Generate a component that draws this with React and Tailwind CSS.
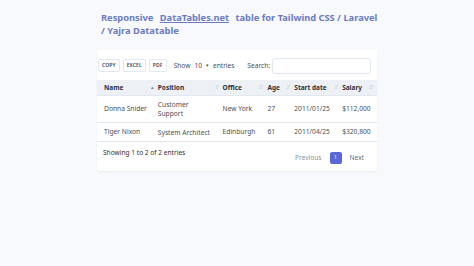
import { useState } from 'react'

const rows = [
  { name: 'Donna Snider', position: ['Customer', 'Support'], office: 'New York', age: '27', start: '2011/01/25', salary: '$112,000' },
  { name: 'Tiger Nixon', position: ['System Architect'], office: 'Edinburgh', age: '61', start: '2011/04/25', salary: '$320,800' },
]

const cols = [
  { label: 'Name', w: 'w-[54px]', sort: '▴' },
  { label: 'Position', w: 'w-[65px]' },
  { label: 'Office', w: 'w-[45px]' },
  { label: 'Age', w: 'w-[27px]' },
  { label: 'Start date', w: 'w-[48px]' },
  { label: 'Salary', w: 'w-[35px]' },
]

export default function App() {
  const [search, setSearch] = useState('')

  return (
    <div className="min-h-[266px] w-[474px] bg-[#f7f9fc] font-['Noto_Sans',sans-serif] text-[#4a4f57]">
      <div className="w-[280px] ml-[97px] pt-[11px]">
        {/* Title */}
        <h1 className="pl-[4px] text-[9.3px] leading-[13px] font-bold text-[#6b7cc0] whitespace-nowrap">
          Responsive <span className="ml-[4px] mr-[4px] underline">DataTables.net</span> table for Tailwind CSS / Laravel
          <br />/ Yajra Datatable
        </h1>

        {/* Card */}
        <div className="mt-[13px] bg-white rounded-[2px] shadow-[0_1px_2px_rgba(0,0,0,0.06)]">
          {/* Toolbar */}
          <div className="flex items-center pl-[1px] pt-[6px] h-[25px]">
            {['COPY', 'EXCEL', 'PDF'].map((b) => (
              <span
                key={b}
                className="mr-[3px] px-[3px] h-[13px] flex items-center border border-[#e2e8f0] rounded-[2px] text-[5px] font-semibold tracking-wide text-[#3f444b]"
              >
                {b}
              </span>
            ))}
            <span className="ml-[4px] text-[6.6px]">Show</span>
            <span className="mx-[2px] flex items-center gap-[4px] px-[2px] h-[10px] text-[6.6px]">
              10 <span className="text-[5px]">▾</span>
            </span>
            <span className="text-[6.6px]">entries</span>
            <span className="ml-auto mr-[6px] flex items-center text-[6.6px]">
              Search:
              <input
                value={search}
                onChange={(e) => setSearch(e.target.value)}
                className="ml-[2px] w-[99px] h-[16px] border border-[#e2e8f0] rounded-[3px] outline-none"
              />
            </span>
          </div>

          {/* Table */}
          <div className="mt-[5px]">
            <div className="flex items-center h-[16px] bg-[#edf0f5] border-b border-[#e2e8f0] pl-[7px] text-[6.5px] font-bold text-[#2d3138]">
              {cols.map((c) => (
                <div key={c.label} className={`${c.w} flex items-center justify-between pr-[4px]`}>
                  <span>{c.label}</span>
                  <span className={`text-[5px] font-normal ${c.sort ? 'text-[#718096]' : 'text-[#cbd5e0]'}`}>{c.sort || '⇵'}</span>
                </div>
              ))}
            </div>
            {rows.map((r, i) => (
              <div
                key={i}
                className={`flex items-center pl-[7px] text-[6.7px] border-b border-[#e2e8f0] ${i === 0 ? 'h-[27px]' : 'h-[19px]'}`}
              >
                <div className="w-[54px]">{r.name}</div>
                <div className="w-[65px] leading-[9px]">
                  {r.position.map((p) => (
                    <div key={p}>{p}</div>
                  ))}
                </div>
                <div className="w-[45px]">{r.office}</div>
                <div className="w-[27px]">{r.age}</div>
                <div className="w-[48px]">{r.start}</div>
                <div className="w-[35px]">{r.salary}</div>
              </div>
            ))}
          </div>

          {/* Footer */}
          <div className="flex items-start justify-between pl-[6px] pr-[13px] pt-[6px] h-[29px] text-[6.6px]">
            <span className="text-[#2d3138]">Showing 1 to 2 of 2 entries</span>
            <div className="flex items-center mt-[4px]">
              <span className="text-[#8a919c]">Previous</span>
              <span className="ml-[8px] w-[12px] h-[12px] flex items-center justify-center rounded-[2px] bg-[#5a67d8] text-white text-[5px]">
                1
              </span>
              <span className="ml-[8px] text-[#6b7280]">Next</span>
            </div>
          </div>
        </div>
      </div>
    </div>
  )
}
